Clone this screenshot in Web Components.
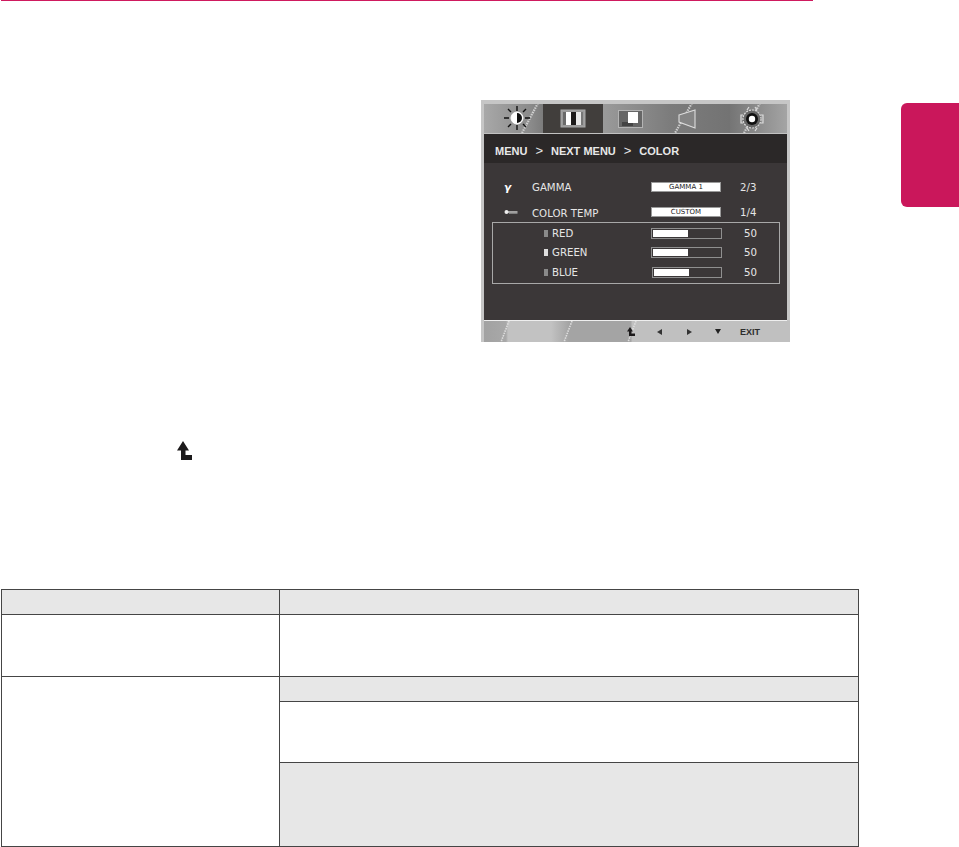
<!DOCTYPE html>
<html>
<head>
<meta charset="utf-8">
<title>Manual page</title>
<style>
    html, body {
        margin: 0;
        background: #fff;
    }
    body {
        height: 847px;
        overflow: hidden;
        font-family: "Liberation Sans", sans-serif;
    }
</style>
</head>
<body>
<manual-page>
    <osd-menu slot="figure">
        <osd-row name="GAMMA" pill="GAMMA 1" value="2/3" icon="gamma"></osd-row>
        <osd-row name="COLOR TEMP" pill="CUSTOM" value="1/4" icon="temp" low></osd-row>
        <osd-group>
            <osd-slider name="RED" value="50" swatch="#8a8a8a"></osd-slider>
            <osd-slider name="GREEN" value="50" swatch="#dedede"></osd-slider>
            <osd-slider name="BLUE" value="50" swatch="#8a8a8a" nudge></osd-slider>
        </osd-group>
    </osd-menu>
    <side-tab slot="tab"></side-tab>
    <return-arrow slot="arrow"></return-arrow>
    <spec-table slot="table"></spec-table>
</manual-page>

<script>
const SLASH = 'stroke="#cfcfcf" stroke-width="2.200" stroke-dasharray="1.500 1"';

/* top level layout of the page */
class ManualPage extends HTMLElement {
    constructor(){
        super();
        this.attachShadow({mode: 'open'});
        this.shadowRoot.innerHTML = `
<style>
    :host {
        display: block;
        width: 959px;
    }
    .rule {
        height: 1px;
        width: 812px;
        margin-left: 1px;
        background: #cf1a5e;
    }
    .top {
        display: flex;
        align-items: flex-start;
        justify-content: space-between;
        padding: 99px 0 0 481px;
    }
    .arrow {
        padding: 99px 0 0 177px;
    }
    .table {
        padding: 128px 0 0 1px;
    }
</style>
<div class="rule"></div>
<div class="top">
    <slot name="figure"></slot>
    <slot name="tab"></slot>
</div>
<div class="arrow"><slot name="arrow"></slot></div>
<div class="table"><slot name="table"></slot></div>
`;
    }
}

class SideTab extends HTMLElement {
    constructor(){
        super();
        this.attachShadow({mode: 'open'});
        this.shadowRoot.innerHTML = `
<style>
    :host {
        display: block;
        width: 58px;
        height: 104px;
        margin-top: 3px;
        background: #ca175b;
        border-radius: 6px 0 0 6px;
    }
</style>
`;
    }
}

class ReturnArrow extends HTMLElement {
    constructor(){
        super();
        this.attachShadow({mode: 'open'});
        this.shadowRoot.innerHTML = `
<style>
    :host {
        display: block;
        width: 16px;
        height: 20px;
    }
    svg {
        display: block;
    }
</style>
<svg width="16" height="20" viewBox="0 0 16 20">
    <path d="M6 0 L12 9.500 L8.500 9.500 L8.500 14 L15 14 L15 19 L4 19 L4 9.500 L0 9.500 Z" fill="#1c1a1b"/>
</svg>
`;
    }
}

/* the bezel, tabs, breadcrumb and footer of the on screen menu */
class OsdMenu extends HTMLElement {
    constructor(){
        super();
        this.attachShadow({mode: 'open'});
        this.shadowRoot.innerHTML = `
<style>
    :host {
        display: block;
        box-sizing: border-box;
        width: 309px;
        height: 242px;
        padding: 4px 3px 0;
        background: #c6c6c6;
    }
    .tabs {
        display: flex;
        height: 29px;
        border-bottom: 1px solid #c2c2c2;
    }
    .tabs div {
        height: 29px;
    }
    .tabs svg {
        display: block;
    }
    .t1 { width: 59px; background: linear-gradient(90deg, #a8a8a8, #8a8a8a 80%, #7c7c7c); }
    .t2 { width: 60px; background: #413e3c; }
    .t3 { width: 67px; background: linear-gradient(90deg, #9a9a9a, #7c7c7c); }
    .t4 { width: 60px; background: linear-gradient(90deg, #7c7c7c, #737373); }
    .t5 { width: 57px; background: linear-gradient(90deg, #757575, #a4a4a4); }
    .crumb {
        display: flex;
        align-items: center;
        gap: 8px;
        box-sizing: border-box;
        height: 29px;
        padding: 4px 0 0 11px;
        background: #2b2828;
        color: #e8e8e8;
        font: bold 11px "Liberation Sans", sans-serif;
    }
    .crumb i {
        font-style: normal;
        font-weight: normal;
        font-size: 13px;
    }
    .body {
        box-sizing: border-box;
        height: 158px;
        padding-top: 17px;
        background: #3b3738;
        border-bottom: 1px solid #eee;
    }
    .foot {
        position: relative;
        height: 21px;
        margin: 0 -3px;
        background: linear-gradient(90deg, #c6c6c6 3px, #a2a2a2 3px, #a8a8a8 25px, #c2c2c2 27px, #c2c2c2 70px, #a4a4a4 88px, #a4a4a4 150px, #c0c0c0 151px);
    }
    .foot svg.slashes {
        position: absolute;
        left: 0;
        top: 0;
    }
    .keys {
        position: absolute;
        left: 0;
        top: 0;
        display: flex;
        align-items: center;
        height: 21px;
        padding-left: 146px;
    }
    .keys svg {
        display: block;
    }
    .exit {
        margin-left: 19px;
        color: #2d2d2d;
        font: bold 9px "Liberation Sans", sans-serif;
    }
</style>
<div class="tabs">
    <div class="t1">
        <svg width="59" height="29" viewBox="0 1 59 29">
            <path d="M54 0 L38 30" ${SLASH}/>
            <g stroke="#111" stroke-width="1.400">
                <path d="M33 3 V8 M33 22 V27 M20 15 H25 M41 15 H46 M24 6 L27 9 M42 6 L39 9 M24 24 L27 21 M42 24 L39 21"/>
            </g>
            <circle cx="33" cy="15" r="6" fill="#fff" stroke="#fff" stroke-width="1"/>
            <path d="M33 10 A5 5 0 0 1 33 20 Z" fill="#111"/>
        </svg>
    </div>
    <div class="t2">
        <svg width="60" height="29" viewBox="0 1 60 29">
            <rect x="18" y="7" width="24" height="17" fill="#9a9a9a" stroke="#a8a8a8" stroke-width="1"/>
            <rect x="20" y="9" width="3" height="13" fill="#6a6a6a"/>
            <rect x="23" y="9" width="5" height="13" fill="#fff"/>
            <rect x="28" y="9" width="5" height="13" fill="#1c1a1a"/>
            <rect x="33" y="9" width="5" height="13" fill="#e8e8e8"/>
            <rect x="38" y="9" width="2" height="13" fill="#777"/>
        </svg>
    </div>
    <div class="t3">
        <svg width="67" height="29" viewBox="0 1 67 29">
            <rect x="15.500" y="7.500" width="24" height="17" fill="#666" stroke="#b4b4b4"/>
            <rect x="19" y="19" width="11" height="4" fill="#444"/>
            <rect x="25" y="9" width="10" height="11" fill="#fff"/>
        </svg>
    </div>
    <div class="t4">
        <svg width="60" height="29" viewBox="0 1 60 29">
            <path d="M22 0 L5 30" ${SLASH}/>
            <path d="M9 12 L25 7 V25 L9 19 Z" fill="#858585" stroke="#dcdcdc" stroke-width="1.100"/>
        </svg>
    </div>
    <div class="t5">
        <svg width="57" height="29" viewBox="0 1 57 29">
            <path d="M30 0 L14 30" ${SLASH}/>
            <circle cx="22" cy="16" r="9" fill="#666" stroke="#dcdcdc" stroke-width="1.200" stroke-dasharray="2 1"/>
            <path d="M13 12 H11 V20 H13 M31 12 H33 V20 H31 M17 7 L19 4 M27 7 L25 4 M17 25 L19 28 M27 25 L25 28" fill="none" stroke="#dcdcdc" stroke-width="1.200"/>
            <circle cx="22" cy="16" r="6" fill="#111"/>
            <circle cx="22" cy="16" r="3.200" fill="#fff"/>
        </svg>
    </div>
</div>
<div class="crumb"><span>MENU</span><i>&gt;</i><span>NEXT MENU</span><i>&gt;</i><span>COLOR</span></div>
<div class="body"><slot></slot></div>
<div class="foot">
    <svg class="slashes" width="309" height="21" viewBox="0 0 309 21">
        <path d="M28 0 L20 21 M91 0 L83 21 M155 0 L147 21" stroke="#dedede" stroke-width="1.600" stroke-dasharray="1.500 1"/>
    </svg>
    <div class="keys">
        <svg width="9" height="10" viewBox="0 0 9 10"><path d="M3 0 L6 4.500 H4.500 V6.500 H8 V9 H2 V4.500 H0 Z" fill="#1c1a1b"/></svg>
        <svg width="5" height="6" viewBox="0 0 5 6" style="margin-left:21px"><path d="M5 0 V6 L0 3 Z" fill="#333"/></svg>
        <svg width="5" height="6" viewBox="0 0 5 6" style="margin-left:25px"><path d="M0 0 V6 L5 3 Z" fill="#333"/></svg>
        <svg width="6" height="5" viewBox="0 0 6 5" style="margin-left:23px"><path d="M0 0 H6 L3 5 Z" fill="#222"/></svg>
        <span class="exit">EXIT</span>
    </div>
</div>
`;
    }
}

class OsdRow extends HTMLElement {
    constructor(){
        super();
        this.attachShadow({mode: 'open'});
    }

    connectedCallback(){
        let icon = this.getAttribute('icon') == 'gamma'
            ? `<span class="gamma">&#947;</span>`
            : `<svg width="14" height="6" viewBox="0 0 14 6"><path d="M3 3 H13.500" stroke="#ddd" stroke-width="1.300"/><path d="M5 4.400 H13.500" stroke="#888" stroke-width="1"/><circle cx="2.500" cy="3" r="2" fill="#eee"/></svg>`;
        let low = this.hasAttribute('low') ? 'padding-top:2px;' : '';
        this.shadowRoot.innerHTML = `
<style>
    :host {
        display: grid;
        grid-template-columns: 28px 119px 70px 1fr;
        align-items: center;
        height: 14px;
        margin-bottom: 11px;
        padding-left: 20px;
        color: #e6e6e6;
        font: 10.200px "DejaVu Sans", sans-serif;
    }
    .gamma {
        font: oblique bold 10.500px "DejaVu Sans", sans-serif;
        color: #fff;
    }
    svg {
        display: block;
    }
    .pill {
        box-sizing: border-box;
        height: 10px;
        background: #fff;
        border: 1px solid #9a9a9a;
        color: #222;
        font-size: 7px;
        line-height: 8px;
        text-align: center;
    }
    .value {
        padding-left: 19px;
    }
</style>
${icon}
<span style="${low}">${this.getAttribute('name')}</span>
<span class="pill">${this.getAttribute('pill')}</span>
<span class="value">${this.getAttribute('value')}</span>
`;
    }
}

class OsdGroup extends HTMLElement {
    constructor(){
        super();
        this.attachShadow({mode: 'open'});
        this.shadowRoot.innerHTML = `
<style>
    :host {
        display: flex;
        flex-direction: column;
        gap: 5.500px;
        box-sizing: border-box;
        width: 288px;
        height: 62px;
        margin: -8px 0 0 8px;
        padding-top: 3px;
        border: 1px solid #a8a8a8;
    }
</style>
<slot></slot>
`;
    }
}

class OsdSlider extends HTMLElement {
    constructor(){
        super();
        this.attachShadow({mode: 'open'});
    }

    connectedCallback(){
        let nudge = this.hasAttribute('nudge') ? 'margin-left:1px;' : '';
        this.shadowRoot.innerHTML = `
<style>
    :host {
        display: grid;
        grid-template-columns: 8px 99px 71px 1fr;
        align-items: center;
        height: 14px;
        padding-left: 51px;
        color: #e6e6e6;
        font: 10.200px "DejaVu Sans", sans-serif;
    }
    .swatch {
        width: 4px;
        height: 7px;
    }
    .bar {
        box-sizing: border-box;
        height: 11px;
        padding: 1px;
        border: 1px solid #8f8f8f;
    }
    .fill {
        width: 35px;
        height: 100%;
        background: #fff;
    }
    .value {
        padding-left: 22px;
    }
</style>
<span class="swatch" style="background:${this.getAttribute('swatch')}"></span>
<span>${this.getAttribute('name')}</span>
<div class="bar" style="${nudge}"><div class="fill"></div></div>
<span class="value">${this.getAttribute('value')}</span>
`;
    }
}

/* empty specification table, only the grid lines and shaded cells */
class SpecTable extends HTMLElement {
    constructor(){
        super();
        this.attachShadow({mode: 'open'});
        this.shadowRoot.innerHTML = `
<style>
    :host {
        display: grid;
        box-sizing: border-box;
        grid-template-columns: 279px 579px;
        grid-template-rows: 25px 62px 25px 61px 84px;
        width: 858px;
        height: 258px;
        border-top: 1px solid #454545;
    }
    div {
        border-bottom: 1px solid #454545;
        border-right: 1px solid #454545;
    }
    div.first {
        border-left: 1px solid #454545;
    }
    .shade {
        background: #e7e7e7;
    }
    .tall {
        grid-row: span 3;
    }
</style>
<div class="first shade"></div>
<div class="shade"></div>
<div class="first"></div>
<div></div>
<div class="first tall"></div>
<div class="shade"></div>
<div></div>
<div class="shade"></div>
`;
    }
}

window.customElements.define('manual-page', ManualPage);
window.customElements.define('side-tab', SideTab);
window.customElements.define('return-arrow', ReturnArrow);
window.customElements.define('osd-menu', OsdMenu);
window.customElements.define('osd-row', OsdRow);
window.customElements.define('osd-group', OsdGroup);
window.customElements.define('osd-slider', OsdSlider);
window.customElements.define('spec-table', SpecTable);
</script>
</body>
</html>
